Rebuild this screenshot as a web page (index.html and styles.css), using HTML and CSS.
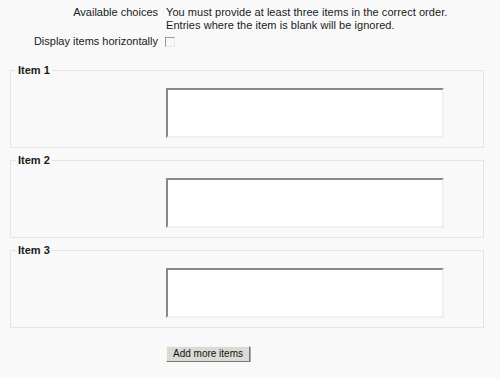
FILE: index.html
```html
<!DOCTYPE html>
<html lang="en">
<head>
  <meta charset="UTF-8">
  <title>Ordering items</title>
  <link rel="stylesheet" href="styles.css">
</head>
<body>
  <form class="mform">
    <div class="row">
      <div class="label">Available choices</div>
      <div class="field">You must provide at least three items in the correct order.<br>Entries where the item is blank will be ignored.</div>
    </div>
    <div class="row row-check">
      <div class="label">Display items horizontally</div>
      <div class="field"><input type="checkbox" class="check"></div>
    </div>

    <fieldset class="item">
      <legend>Item 1</legend>
      <div class="row row-inner">
        <div class="label"></div>
        <div class="field"><textarea></textarea></div>
      </div>
    </fieldset>

    <fieldset class="item">
      <legend>Item 2</legend>
      <div class="row row-inner">
        <div class="label"></div>
        <div class="field"><textarea></textarea></div>
      </div>
    </fieldset>

    <fieldset class="item">
      <legend>Item 3</legend>
      <div class="row row-inner">
        <div class="label"></div>
        <div class="field"><textarea></textarea></div>
      </div>
    </fieldset>

    <div class="row row-btn">
      <div class="label"></div>
      <div class="field"><button type="button" class="add-btn">Add more items</button></div>
    </div>
  </form>
</body>
</html>
```

FILE: styles.css
```css
* { margin: 0; padding: 0; box-sizing: border-box; }
body {
  font-family: "Liberation Sans", Arial, sans-serif;
  font-size: 11px;
  line-height: 13px;
  color: #1a1a1a;
  background: #f9f9f9;
}
.mform { padding-top: 6px; }
.row {
  display: grid;
  grid-template-columns: 158px 1fr;
  column-gap: 8px;
}
.label { text-align: right; }
.field { letter-spacing: 0.05px; }
.row-check { margin-top: 3px; height: 13px; }
.check {
  appearance: none;
  display: block;
  width: 10px;
  height: 10px;
  margin: 2px 0 0 -1px;
  border: 1px solid;
  border-color: #9a9a9a #e8e8e8 #e8e8e8 #9a9a9a;
  background: #f8f8f8;
}
.item {
  margin: 16px 16px 0 10px;
  border: 1px solid #e4e4e4;
  padding: 11px 0 9px 0;
}
.item + .item { margin-top: 6px; }
.item legend {
  margin-left: 5px;
  padding: 0 2px;
  font-weight: bold;
  line-height: 13px;
}
.row-inner { grid-template-columns: 147px 1fr; }
textarea {
  display: block;
  width: 278px;
  height: 50px;
  resize: none;
  background: #fff;
  border: 2px solid;
  border-color: #888 #f0f0f0 #f0f0f0 #888;
}
.row-btn { margin-top: 18px; }
.add-btn {
  display: block;
  width: 84px;
  height: 16px;
  font-family: "Liberation Sans", Arial, sans-serif;
  font-size: 10px;
  line-height: 12px;
  color: #111;
  background: #dcdad5;
  border: 1px solid;
  border-color: #f4f4f4 #777 #777 #f4f4f4;
  box-shadow: 1px 1px 0 #aaa;
}
```
